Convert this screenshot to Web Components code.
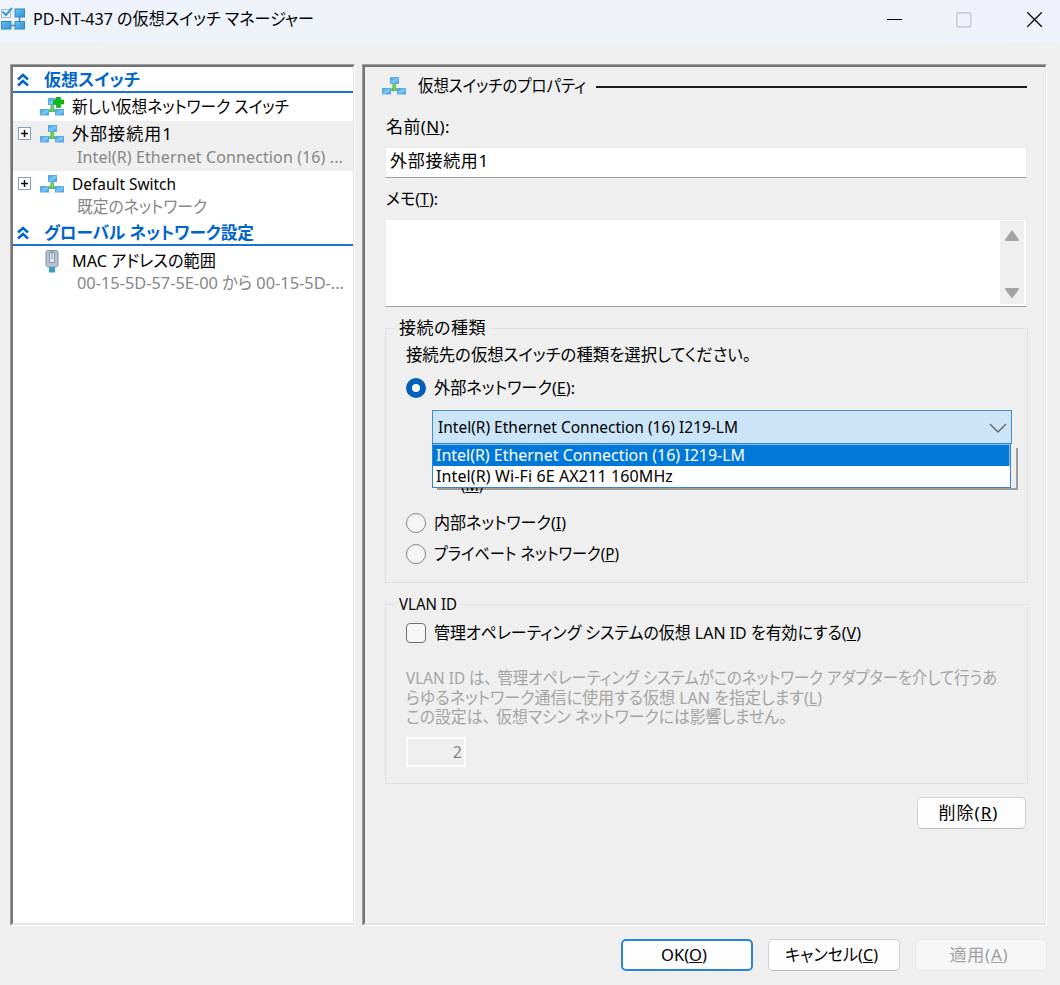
<!DOCTYPE html>
<html lang="ja">
<head>
<meta charset="utf-8">
<title>仮想スイッチ マネージャー</title>
<style>
html, body {
	margin: 0;
	height: 100%;
	overflow: hidden;
}
body {
	font: 17px "Noto Sans", "Noto Sans CJK JP", sans-serif;
	color: #000;
	background: #efefef;
}
</style>
</head>
<body>
<switch-manager></switch-manager>

<script>
//#region HELPERS
const define = (name, html, setup) => {
	const template = document.createElement("template");
	template.innerHTML = html;
	window.customElements.define(
		name,
		class extends HTMLElement {
			constructor() {
				super();
				this._shadowRoot = this.attachShadow({mode: "open"});
				this._shadowRoot.appendChild(template.content.cloneNode(true));
			}

			connectedCallback() {
				if (setup) setup(this, this._shadowRoot);
			}
		}
	);
};
//#endregion HELPERS

//#region TEXT
// one line of text, tracked so that it fills the width in "w"
define(
	"ui-text",
	/* html */ `
<style>
:host {
	display: block;
	flex: none;
	height: 20px;
	line-height: 20px;
	white-space: nowrap;
	font-feature-settings: "palt";
}
:host([latin]) {
	font-size: 16px;
}
span {
	display: inline-block;
	height: 20px;
	transform-origin: 0 50%;
}
</style>
<span><slot></slot></span>
`,
	(el, root) => {
		const w = Number(el.getAttribute("w"));
		if (!w) return;
		const span = root.querySelector("span");
		const natural = span.getBoundingClientRect().width;
		const count = el.textContent.length;
		const scale = Math.min(1, Math.max(0.86, w / natural));
		el.style.width = w + "px";
		span.style.letterSpacing = (w / scale - natural) / count + "px";
		span.style.transform = `scaleX(${scale})`;
	}
);
//#endregion TEXT

//#region ICONS
define(
	"net-icon",
	/* html */ `
<style>
:host { display: block; flex: none; width: 24px; height: 20px; }
svg { display: block; }
.plus { display: none; }
:host([plus]) .plus { display: inline; }
</style>
<svg width="24" height="20" viewBox="0 0 24 20">
	<defs>
		<linearGradient id="b" x1="0" y1="0" x2="1" y2="1">
			<stop offset="0" stop-color="#3f9fe2"/><stop offset=".55" stop-color="#7cccfb"/><stop offset="1" stop-color="#3a9be6"/>
		</linearGradient>
	</defs>
	<path d="M10.500 7.500h3.500v4l3 3.500H7l3.500-3.500z" fill="#52c155"/>
	<path d="M12 8h1v6h-1z" fill="#86da80"/>
	<rect x="8" y="1" width="9" height="7" fill="#5fa8dc"/>
	<rect x="9" y="2" width="7" height="5" fill="url(#b)"/>
	<rect x="0" y="12" width="9" height="6.500" fill="#5fa8dc"/>
	<rect x="1" y="13" width="7" height="4.500" fill="url(#b)"/>
	<rect x="15" y="12" width="9" height="6.500" fill="#5fa8dc"/>
	<rect x="16" y="13" width="7" height="4.500" fill="url(#b)"/>
	<path class="plus" d="M16.500 0h4v3h3.500v4h-3.500v3.500h-4V7H13.500V3h3z" fill="#0abf14" stroke="#0a9e12" stroke-width=".6"/>
</svg>
`
);

define(
	"mac-icon",
	/* html */ `
<style>
:host { display: block; flex: none; width: 24px; height: 24px; }
svg { display: block; }
</style>
<svg width="24" height="24" viewBox="0 0 24 24">
	<path d="M9 17h6v6.500h-6z" fill="#35a0c8"/>
	<path d="M7 1.500h10l1 1v14l-1.500 1.500h-9L6 16.500v-14z" fill="#b4c2d1" stroke="#8394a6"/>
	<path d="M9.500 3.500h5v10h-5z" fill="#e3eaf0" stroke="#8394a6"/>
	<path d="M11.500 2v8h1V2z" fill="#7a8b9d"/>
</svg>
`
);

define(
	"app-icon",
	/* html */ `
<style>
:host { display: block; flex: none; width: 25px; height: 25px; }
svg { display: block; }
</style>
<svg width="25" height="25" viewBox="0 0 25 25">
	<defs>
		<linearGradient id="a" x1="0" y1="0" x2="1" y2="1">
			<stop offset="0" stop-color="#6cc0f2"/><stop offset="1" stop-color="#2b95dc"/>
		</linearGradient>
	</defs>
	<path d="M10 19.500h5M19.500 10v5" stroke="#707c86" stroke-width="1.500"/>
	<rect x="1.500" y="3.500" width="9" height="8" fill="#f4f7fa" stroke="#b0b8c2"/>
	<rect x="15" y="3" width="9.500" height="8" fill="url(#a)" stroke="#3487bd"/>
	<rect x="1.500" y="15.500" width="9.500" height="7.500" fill="url(#a)" stroke="#3487bd"/>
	<rect x="15" y="15.500" width="9.500" height="7.500" fill="url(#a)" stroke="#3487bd"/>
	<path d="M2.500 5.500L6 9L12 2" fill="none" stroke="#2f9be4" stroke-width="2"/>
</svg>
`
);
//#endregion ICONS

//#region TITLE BAR
define(
	"title-bar",
	/* html */ `
<style>
:host {
	display: flex;
	flex: none;
	box-sizing: border-box;
	height: 43px;
	padding: 6px 17px 0 0;
	background: linear-gradient(90deg, #eef3fc, #eef3f8 40%, #eef3f8 80%, #eef2fc);
}
ui-text { margin: 3px 0 0 8px; }
.buttons {
	display: flex;
	gap: 53px;
	margin: 6px 0 0 auto;
}
svg { display: block; fill: none; stroke: #000; }
.close { margin-left: 2px; }
</style>
<app-icon></app-icon>
<ui-text w="281"><slot></slot></ui-text>
<div class="buttons">
	<svg width="16" height="16"><path d="M0 7.500h15"/></svg>
	<svg width="16" height="16"><rect x=".8" y=".8" width="14" height="14" rx="1" stroke="#c0c3c8" stroke-width="1.200"/></svg>
	<svg class="close" width="16" height="16"><path d="M.3.3l14.500 14.500M14.800.3L.3 14.800" stroke-width="1.300"/></svg>
</div>
`
);
//#endregion TITLE BAR

//#region CONTROLS
define(
	"sunken-panel",
	/* html */ `
<style>
:host {
	display: block;
	box-sizing: border-box;
	border: 1px solid;
	border-color: #a0a0a0 #fff #fff #a0a0a0;
}
.inner {
	box-sizing: border-box;
	height: 100%;
	border: 2px solid;
	border-color: #747474 #e3e3e3 #e3e3e3 #747474;
	border-right-width: 1.500px;
}
</style>
<div class="inner"><slot></slot></div>
`
);

define(
	"ui-button",
	/* html */ `
<style>
:host {
	display: flex;
	box-sizing: border-box;
	justify-content: center;
	align-items: center;
	width: 132px;
	height: 32px;
	padding-right: 6px;
	background: #fdfdfd;
	border: 1px solid #d0d0d0;
	border-bottom-color: #bcbcbc;
	border-radius: 5px;
}
:host([primary]) { border: 2px solid #2a86d2; }
:host([disabled]) { padding-right: 4px; color: #a0a0a0; background: #f6f6f6; border-color: #e8e8e8; }
</style>
<slot></slot>
`
);

define(
	"radio-row",
	/* html */ `
<style>
:host { display: flex; align-items: center; gap: 8px; height: 22px; }
i {
	box-sizing: border-box;
	flex: none;
	width: 20px;
	height: 20px;
	border: 1.500px solid #858585;
	border-radius: 50%;
	background: #f5f5f5;
}
:host([checked]) i { border: 6px solid #005fb8; background: #fff; }
:host([box]) i { border-radius: 4px; border-color: #707070; }
</style>
<i></i><slot></slot>
`
);

define(
	"group-box",
	/* html */ `
<style>
:host {
	display: block;
	box-sizing: border-box;
	border: 1px solid #e0e0e0;
}
.legend {
	width: fit-content;
	height: 20px;
	margin: -11px 0 0 9px;
	padding: 0 4px;
	background: #efefef;
}
</style>
<div class="legend"><slot name="legend"></slot></div>
<slot></slot>
`
);

define(
	"combo-box",
	/* html */ `
<style>
:host { display: block; position: relative; width: 580px; }
.field {
	display: flex;
	box-sizing: border-box;
	justify-content: space-between;
	height: 34px;
	padding: 6px 4px 0 5px;
	border: 1px solid #3f8fd0;
	background: #cce4f7;
}
svg { display: block; margin-top: 4px; }
/* the open list covers what follows the field */
.list {
	position: absolute;
	z-index: 1;
	top: 33px;
	left: 0;
	box-sizing: border-box;
	width: 579px;
	height: 45px;
	border: 1px solid #2f86cf;
	background: #fff;
}
.shade {
	position: absolute;
	top: 38px;
	left: 5px;
	width: 579px;
	height: 40px;
	border: solid #9c9c9c;
	border-width: 0 2px 2px 0;
	background: #efefef;
}
.item { box-sizing: border-box; height: 21px; padding-left: 3px; }
.item.on { height: 22px; color: #fff; background: #0078d7; border: solid #8cc0ec; border-width: 1px 1px 0 0; }
</style>
<div class="field">
	<ui-text latin w="300"><slot></slot></ui-text>
	<svg width="18" height="14"><path d="M1 3l8 8 8-8" fill="none" stroke="#666" stroke-width="1.500"/></svg>
</div>
<div class="shade"></div>
<div class="list">
	<div class="item on"><ui-text latin w="309">Intel(R) Ethernet Connection (16) I219-LM</ui-text></div>
	<div class="item"><ui-text latin w="237">Intel(R) Wi-Fi 6E AX211 160MHz</ui-text></div>
</div>
`
);
//#endregion CONTROLS

//#region TREE
define(
	"tree-header",
	/* html */ `
<style>
:host {
	display: flex;
	box-sizing: border-box;
	height: 26px;
	padding: 3px 0 0 4px;
	border-bottom: 2px solid #1c72d0;
	color: #0066cc;
	font-weight: bold;
}
svg { display: block; margin: 3px 15px 0 0; }
</style>
<svg width="12" height="14"><path d="M1 6.500l5-4.500 5 4.500M1 12.500l5-4.500 5 4.500" fill="none" stroke="#0066cc" stroke-width="2.500"/></svg>
<slot></slot>
`
);

define(
	"tree-item",
	/* html */ `
<style>
:host { display: block; box-sizing: border-box; }
:host([selected]) { background: #efefef; }
.row { display: flex; height: 24px; padding-left: 5px; align-items: center; }
.expander { width: 14px; height: 14px; margin-right: 8px; }
.expander svg { display: none; }
:host([expandable]) .expander svg { display: block; }
.name { margin-left: 8px; }
.sub { padding: 1px 0 0 64px; color: #868686; }
</style>
<div class="row">
	<div class="expander"><svg width="14" height="14"><rect x=".5" y=".5" width="12" height="12" fill="#fff" stroke="#86a0b8"/><path d="M3 6.500h7M6.500 3v7" stroke="#111" stroke-width="1.500"/></svg></div>
	<slot name="icon"><net-icon></net-icon></slot>
	<div class="name"><slot></slot></div>
</div>
<div class="sub"><slot name="sub"></slot></div>
`
);

define(
	"switch-tree",
	/* html */ `
<style>
:host { display: block; height: 100%; background: #fff; }
.first { height: 28px; padding-top: 2px; }
.ext { height: 50px; padding-top: 1px; }
.def { height: 49px; padding-top: 1px; }
.mac { padding-top: 3px; }
</style>
<tree-header><ui-text w="96">仮想スイッチ</ui-text></tree-header>
<tree-item class="first"><net-icon slot="icon" plus></net-icon><ui-text w="217">新しい仮想ネットワーク スイッチ</ui-text></tree-item>
<tree-item class="ext" selected expandable><ui-text w="101">外部接続用1</ui-text><ui-text slot="sub" latin w="266">Intel(R) Ethernet Connection (16) ...</ui-text></tree-item>
<tree-item class="def" expandable><ui-text latin w="104">Default Switch</ui-text><ui-text slot="sub" w="130">既定のネットワーク</ui-text></tree-item>
<tree-header><ui-text w="210">グローバル ネットワーク設定</ui-text></tree-header>
<tree-item class="mac"><mac-icon slot="icon"></mac-icon><ui-text w="144">MAC アドレスの範囲</ui-text><ui-text slot="sub" style="margin-top: -1px" w="267">00-15-5D-57-5E-00 から 00-15-5D-...</ui-text></tree-item>
`
);
//#endregion TREE

//#region PROPERTIES
define(
	"switch-properties",
	/* html */ `
<style>
:host { display: block; box-sizing: border-box; height: 100%; padding: 9px 16px 0 20px; }
.head { display: flex; align-items: center; width: 645px; height: 20px; margin-left: -3px; }
.head ui-text { margin-left: 12px; }
.head hr { flex: 1; height: 2px; margin: 2px 0 0 10px; border: 0; background: #1a1a1a; }
.label { margin: 21px 0 0 1px; }
.field, .memo {
	box-sizing: border-box;
	width: 642px;
	background: #fff;
	border: 1px solid #ebebeb;
	border-bottom: 1px solid #a0a0a0;
}
.field { height: 31px; margin-top: 10px; padding: 3px 0 0 4px; }
.label.second { margin-top: 11px; }
.memo { display: flex; justify-content: flex-end; height: 88px; margin-top: 10px; padding: 1px 2px 2px; }
.bar { display: flex; flex-direction: column; justify-content: space-between; align-items: center; box-sizing: border-box; width: 24px; padding: 9px 0 5px; background: #efefef; }
svg { display: block; }
group-box { width: 643px; }
.kind { height: 255px; margin-top: 21px; }
.vlan { height: 180px; margin-top: 21px; }
.kind > *, .vlan > * { margin-left: 20px; }
[slot="legend"] { margin: 0 !important; }
combo-box { margin: 11px 0 0 46px !important; }
.share { margin: 31px 0 0 75px !important; }
.muted { color: #a4a4a4; }
/* full-width comma inside proportional text */
.comma { margin-right: 6px; }
.id {
	display: flex;
	justify-content: flex-end;
	box-sizing: border-box;
	width: 60px;
	height: 30px;
	padding: 3px 2px 0;
	border: 2px solid #fcfcfc;
	color: #858585;
}
.remove { width: 109px; margin: 13px 0 0 532px; }
</style>
<div class="head"><net-icon></net-icon><ui-text w="168">仮想スイッチのプロパティ</ui-text><hr></div>
<ui-text class="label" w="64">名前(<u>N</u>):</ui-text>
<div class="field"><ui-text w="99">外部接続用1</ui-text></div>
<ui-text class="label second" w="52">メモ(<u>T</u>):</ui-text>
<div class="memo">
	<div class="bar">
		<svg width="16" height="12"><path d="M8 1.500l6 8.500H2z" fill="#a3a3a3" stroke="#a3a3a3" stroke-width="2" stroke-linejoin="round"/></svg>
		<svg width="16" height="12"><path d="M8 10l6-8H2z" fill="#a3a3a3" stroke="#a3a3a3" stroke-width="2" stroke-linejoin="round"/></svg>
	</div>
</div>
<group-box class="kind">
	<ui-text slot="legend" w="87">接続の種類</ui-text>
	<ui-text style="margin-top: 7px" w="345">接続先の仮想スイッチの種類を選択してください。</ui-text>
	<radio-row style="margin-top: 12px" checked><ui-text w="141">外部ネットワーク(<u>E</u>):</ui-text></radio-row>
	<combo-box>Intel(R) Ethernet Connection (16) I219-LM</combo-box>
	<ui-text class="share" w="22">(<u>M</u>)</ui-text>
	<radio-row style="margin-top: 17px"><ui-text w="132">内部ネットワーク(<u>I</u>)</ui-text></radio-row>
	<radio-row style="margin-top: 9px"><ui-text w="185">プライベート ネットワーク(<u>P</u>)</ui-text></radio-row>
</group-box>
<group-box class="vlan">
	<ui-text slot="legend" latin w="58">VLAN ID</ui-text>
	<radio-row style="margin-top: 8px" box><ui-text w="427">管理オペレーティング システムの仮想 LAN ID を有効にする(<u>V</u>)</ui-text></radio-row>
	<ui-text class="muted" style="margin-top: 24px" w="591">VLAN ID は<span class="comma">、</span>管理オペレーティング システムがこのネットワーク アダプターを介して行うあ</ui-text>
	<ui-text class="muted" w="416">らゆるネットワーク通信に使用する仮想 LAN を指定します(<u>L</u>)</ui-text>
	<ui-text class="muted" style="margin-top: -1px" w="381">この設定は<span class="comma">、</span>仮想マシン ネットワークには影響しません。</ui-text>
	<div class="id" style="margin-top: 10px"><ui-text latin>2</ui-text></div>
</group-box>
<ui-button class="remove"><ui-text w="60">削除(<u>R</u>)</ui-text></ui-button>
`
);
//#endregion PROPERTIES

//#region WINDOW
define(
	"switch-manager",
	/* html */ `
<style>
:host { display: flex; flex-direction: column; height: 985px; background: #efefef; }
main { display: flex; gap: 7px; height: 862px; padding: 21px 13px 0 10px; }
.left { width: 345px; }
.right { flex: 1; }
footer { display: flex; gap: 15px; justify-content: flex-end; padding: 13px 13px 0 0; }
</style>
<title-bar>PD-NT-437 の仮想スイッチ マネージャー</title-bar>
<main>
	<sunken-panel class="left"><switch-tree></switch-tree></sunken-panel>
	<sunken-panel class="right"><switch-properties></switch-properties></sunken-panel>
</main>
<footer>
	<ui-button primary><ui-text w="46">OK(<u>O</u>)</ui-text></ui-button>
	<ui-button><ui-text w="93">キャンセル(<u>C</u>)</ui-text></ui-button>
	<ui-button disabled><ui-text w="59">適用(<u>A</u>)</ui-text></ui-button>
</footer>
`
);
//#endregion WINDOW
</script>
</body>
</html>
